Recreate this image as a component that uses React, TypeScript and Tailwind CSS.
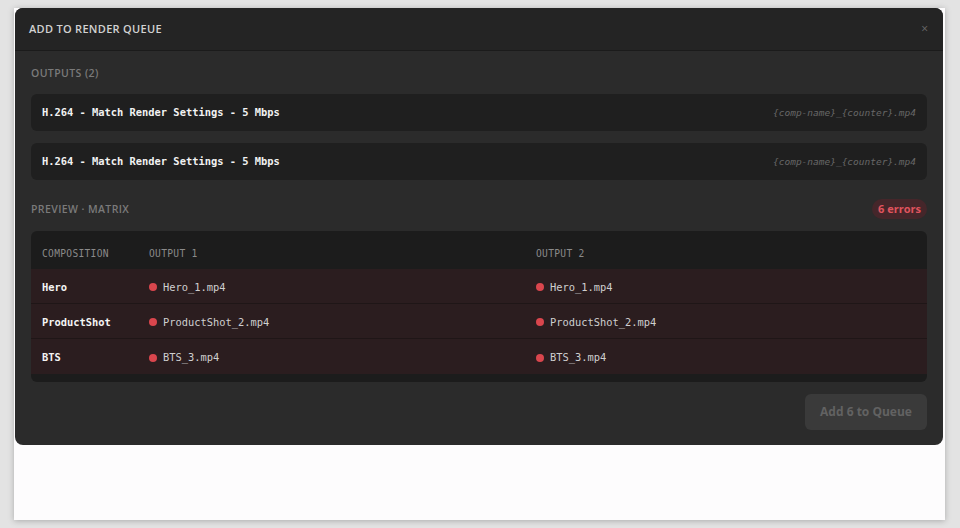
import React from 'react';

const outputs = [
  { id: 1, preset: 'H.264 - Match Render Settings - 5 Mbps', pattern: '{comp-name}_{counter}.mp4' },
  { id: 2, preset: 'H.264 - Match Render Settings - 5 Mbps', pattern: '{comp-name}_{counter}.mp4' },
];

const rows = [
  { comp: 'Hero', files: ['Hero_1.mp4', 'Hero_1.mp4'] },
  { comp: 'ProductShot', files: ['ProductShot_2.mp4', 'ProductShot_2.mp4'] },
  { comp: 'BTS', files: ['BTS_3.mp4', 'BTS_3.mp4'] },
];

const sans = "font-['Open_Sans','Noto_Sans',sans-serif]";
const mono = "font-['DejaVu_Sans_Mono','Liberation_Mono',monospace]";

function ErrorCell({ file }: { file: string }) {
  return (
    <div className="flex items-center gap-[6px] px-[11px]">
      <span className="w-[8px] h-[8px] rounded-full bg-[#d9464d] shrink-0" />
      <span className="text-[#cfcfcf]">{file}</span>
    </div>
  );
}

export default function App() {
  return (
    <div className={`min-h-[528px] bg-[#e3e3e3] pt-2 pl-[14px] ${sans}`}>
      <div className="w-[931px] h-[512px] bg-[#fdfcfd] shadow-[0_1px_6px_rgba(0,0,0,0.25)]">
        <div className="ml-px w-[928px] rounded-lg bg-[#2b2b2b] overflow-hidden">
          {/* header */}
          <div className="h-[43px] flex items-center justify-between px-[14px] bg-[#242424] border-b border-[#1b1b1b]">
            <span className="text-[11px] font-semibold tracking-[0.3px] text-[#d2d2d2]">ADD TO RENDER QUEUE</span>
            <span className="text-[12px] text-[#6a6a6a] mr-[1px] leading-none">×</span>
          </div>

          <div className="px-4 pt-[13px] pb-[15px]">
            <div className="text-[10.5px] font-semibold tracking-[0.4px] text-[#7a7a7a] h-[20px] flex items-center">OUTPUTS (2)</div>

            <div className="mt-[10px] flex flex-col gap-[12px]">
              {outputs.map((o) => (
                <div key={o.id} className={`h-[37px] rounded-md bg-[#1f1f1f] flex items-center justify-between px-[11px] ${mono}`}>
                  <span className="text-[10.4px] font-bold text-[#f2f2f2]">{o.preset}</span>
                  <span className="text-[9.5px] italic text-[#676767] pt-[2px]">{o.pattern}</span>
                </div>
              ))}
            </div>

            <div className="mt-[19px] h-[20px] flex items-center justify-between">
              <span className="text-[10.5px] font-semibold tracking-[0.4px] text-[#7a7a7a] pt-px">PREVIEW · MATRIX</span>
              <span className="h-[20px] px-[6px] rounded-full bg-[#45262a] text-[#e0545e] text-[11px] font-bold flex items-center">6 errors</span>
            </div>

            {/* comp × output matrix */}
            <div className={`mt-[12px] rounded-md bg-[#1c1c1c] pb-[8px] overflow-hidden ${mono}`}>
              <div className="grid grid-cols-[107px_387px_1fr] h-[38px] items-center pt-[9px] text-[9.6px] tracking-[0.3px] text-[#8a8a8a]">
                <span className="px-[11px]">COMPOSITION</span>
                <span className="px-[11px]">OUTPUT 1</span>
                <span className="px-[11px]">OUTPUT 2</span>
              </div>
              {rows.map((r, i) => (
                <div
                  key={r.comp}
                  className={`grid grid-cols-[107px_387px_1fr] h-[35px] items-center pt-[3px] text-[10.4px] bg-[#2b1d1f] ${i < rows.length - 1 ? 'border-b border-[#1f1617]' : ''}`}
                >
                  <span className="px-[11px] font-bold text-[#f4f4f4]">{r.comp}</span>
                  {r.files.map((f, j) => (
                    <ErrorCell key={j} file={f} />
                  ))}
                </div>
              ))}
            </div>

            <div className="mt-[12px] flex justify-end">
              <button className="h-[36px] w-[122px] rounded-md bg-[#3a3a3a] text-[12px] font-bold text-[#626262]" disabled>
                Add 6 to Queue
              </button>
            </div>
          </div>
        </div>
      </div>
    </div>
  );
}
